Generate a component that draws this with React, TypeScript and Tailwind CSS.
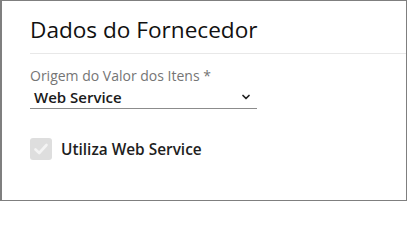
import { ChevronDown } from 'lucide-react';

export default function App() {
  return (
    <div
      className="w-[407px] h-[201px] border border-l-2 border-[#7f7f7f] bg-white overflow-hidden"
      style={{ fontFamily: '"Open Sans", sans-serif' }}
    >
      <div className="pl-[28px] pt-[13px]">
        <h2 className="text-[22.6px] leading-[30px] text-[#111] font-medium pt-[1px]">
          Dados do Fornecedor
        </h2>
        <div className="mt-[8px] h-px bg-[#e8e8e8]" />

        <div className="mt-[13px] w-[227px]">
          <label className="block text-[14px] leading-[18px] text-[#757575]">
            Origem do Valor dos Itens *
          </label>
          <div className="flex items-center justify-between pt-[2px] pb-[1px] border-b border-[#8c8c8c] pl-[4px] pr-[5px]">
            <span className="text-[15px] leading-[20px] font-semibold text-[#1a1a1a]">
              Web Service
            </span>
            <ChevronDown size={12} strokeWidth={3.5} className="text-[#222]" />
          </div>
        </div>

        <label className="mt-[29px] flex items-center gap-[9px]">
          <span className="w-[22px] h-[22px] rounded-[3px] bg-[#dedede] flex items-center justify-center">
            <svg width="16" height="16" viewBox="0 0 16 16" fill="none">
              <path
                d="M2.5 8.5 L6.2 12 L13.5 4"
                stroke="#f4f4f4"
                strokeWidth="2.6"
                strokeLinecap="round"
                strokeLinejoin="round"
              />
            </svg>
          </span>
          <span className="text-[15.4px] leading-[20px] font-semibold text-[#1e1e1e] pt-[1px]">
            Utiliza Web Service
          </span>
        </label>
      </div>
    </div>
  );
}
